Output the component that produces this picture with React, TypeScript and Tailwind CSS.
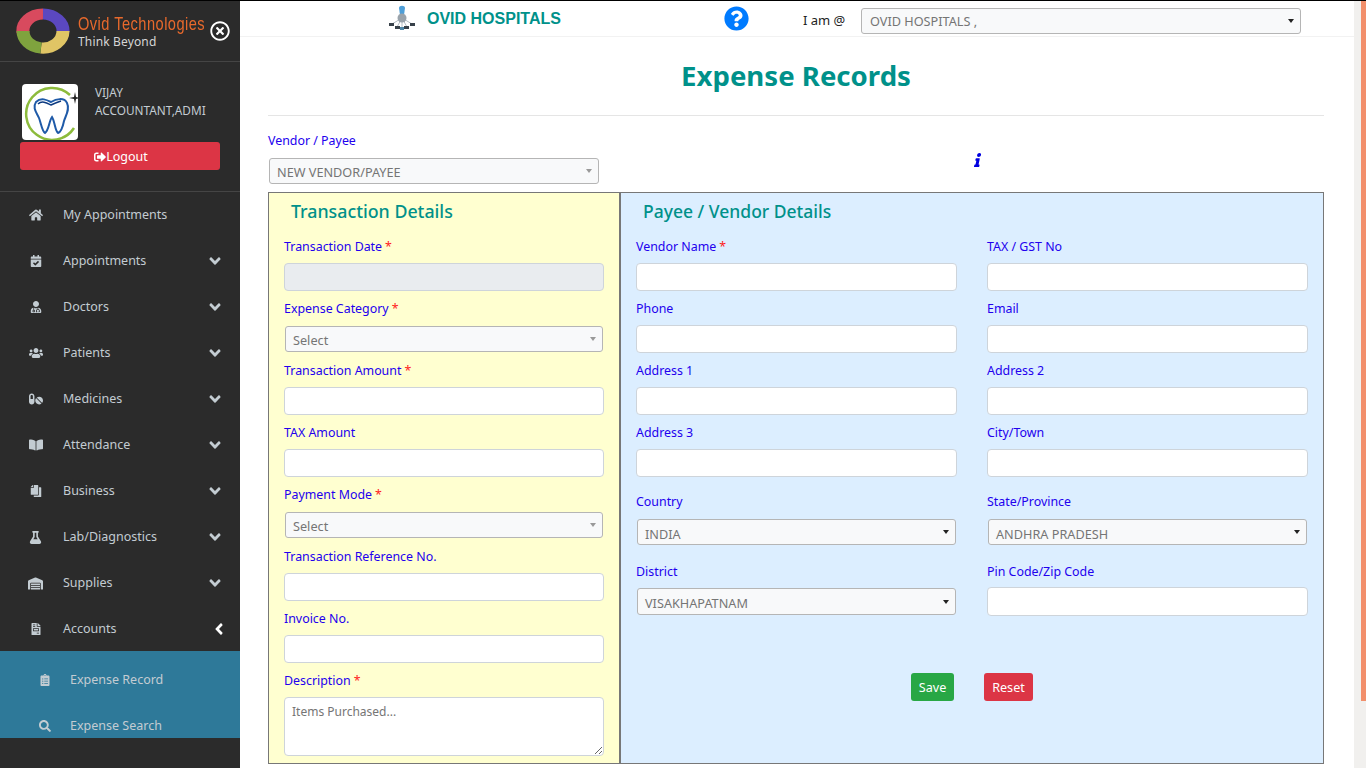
import type { ReactNode } from "react";
import {
  FaAngleDown,
  FaAngleLeft,
  FaBookOpen,
  FaCalendarCheck,
  FaClipboardList,
  FaCopy,
  FaFileInvoice,
  FaFlask,
  FaHome,
  FaInfo,
  FaPills,
  FaQuestionCircle,
  FaRegTimesCircle,
  FaSearch,
  FaSignOutAlt,
  FaUserMd,
  FaUsers,
  FaWarehouse,
} from "react-icons/fa";

const menu = [
  { label: "My Appointments", icon: <FaHome />, arrow: false },
  { label: "Appointments", icon: <FaCalendarCheck className="text-[12px]" />, arrow: true },
  { label: "Doctors", icon: <FaUserMd className="text-[12px]" />, arrow: true },
  { label: "Patients", icon: <FaUsers />, arrow: true },
  { label: "Medicines", icon: <FaPills />, arrow: true },
  { label: "Attendance", icon: <FaBookOpen />, arrow: true },
  { label: "Business", icon: <FaCopy className="text-[12px] -scale-x-100" />, arrow: true },
  { label: "Lab/Diagnostics", icon: <FaFlask className="text-[13px]" />, arrow: true },
  { label: "Supplies", icon: <FaWarehouse className="text-[15px]" />, arrow: true },
  { label: "Accounts", icon: <FaFileInvoice className="text-[12px]" />, arrow: false },
];

function DonutLogo() {
  return (
    <svg viewBox="-27 -27 54 54" preserveAspectRatio="none" className="h-[46px] w-[54px]">
      <g fill="none" strokeWidth="13">
        <path d="M-20 2A20 20 0 0 1 0 -20" stroke="#d84a5e" />
        <path d="M0 -20A20 20 0 0 1 20 1" stroke="#5b48c0" />
        <path d="M20 0A20 20 0 0 1 -2 20" stroke="#e0c565" />
        <path d="M-2 20A20 20 0 0 1 -20 0" stroke="#7fa33e" />
      </g>
    </svg>
  );
}

function ToothLogo() {
  return (
    <svg viewBox="0 0 56 56" className="h-14 w-14">
      <path d="M48 11A26 26 0 1 0 52 44" fill="none" stroke="#8dbb3c" strokeWidth="2.5" />
      <path
        d="M14 18C19 13 25 16 29 18C34 15 42 13 45 19C48 25 44 31 42 37C41 42 39 48 36 49C33 47 33 38 30 33C27 37 27 46 23 49C20 47 19 39 17 34C15 29 10 24 14 18Z"
        fill="none"
        stroke="#1f5aa8"
        strokeWidth="2"
      />
      <path d="M16 20C20 16 25 19 29 21C33 19 36 18 39 17" fill="none" stroke="#0d3a80" strokeWidth="1.5" />
      <polygon points="53,8 54,13 59,14 54,15 53,20 52,15 47,14 52,13" fill="#222" />
    </svg>
  );
}

function NetworkLogo() {
  return (
    <svg viewBox="0 0 28 28" className="h-7 w-7 blur-[0.4px]">
      <path d="M14 13L4 19M14 13L9 22M14 13L19 22M14 13L24 19M14 13V23" stroke="#b4bcc4" strokeWidth="1" />
      <path d="M11 3C11 0 17 0 17 3L16 10H12Z" fill="#4f9fd8" />
      <circle cx="14" cy="13" r="4.5" fill="#9aa3ab" />
      <rect x="1" y="18" width="5" height="3" fill="#38414a" />
      <rect x="7" y="21" width="5" height="3" fill="#38414a" />
      <rect x="12" y="22" width="4" height="3" fill="#4f87a8" />
      <rect x="16" y="21" width="5" height="3" fill="#38414a" />
      <rect x="22" y="18" width="5" height="3" fill="#38414a" />
    </svg>
  );
}

function Sidebar() {
  return (
    <aside className="flex h-full w-[240px] shrink-0 flex-col bg-[#2b2b2b] font-['Noto_Sans',sans-serif] text-[#c3ccd2]">
      <div className="flex h-[60px] shrink-0 items-center pl-4">
        <DonutLogo />
        <div className="ml-2 flex w-[132px] flex-col pt-[1px]">
          <span className="origin-left scale-x-[0.77] font-['Liberation_Sans',sans-serif] text-[19px] leading-[20px] tracking-[0.6px] whitespace-nowrap text-[#e8692c]">
            Ovid Technologies
          </span>
          <span className="text-[12px] leading-[16px] tracking-[0.15px] text-[#d5d5d5]">Think Beyond</span>
        </div>
        <FaRegTimesCircle className="text-[20px] text-white" />
      </div>

      <div className="h-[131px] shrink-0 border-y border-[#454545] px-5 pt-[22px]">
        <div className="flex pl-[2px]">
          <div className="h-14 w-14 overflow-hidden rounded bg-white">
            <ToothLogo />
          </div>
          <div className="-mt-px ml-[17px] text-[11.8px] leading-[18px]">
            <p>VIJAY</p>
            <p>ACCOUNTANT,ADMI</p>
          </div>
        </div>
        <button className="mt-[2px] flex h-7 w-[200px] items-center justify-center rounded-[3px] bg-[#dc3545] pt-[2px] pl-[2px] text-[12.5px] text-white">
          <FaSignOutAlt className="text-[12px]" />
          Logout
        </button>
      </div>

      {menu.map((item) => (
        <div key={item.label} className="flex h-[46px] shrink-0 items-center pl-7 pr-[16px] text-[12.5px]">
          <span className="flex w-[15px] justify-center text-[14px]">{item.icon}</span>
          <span className="ml-5 flex-1">{item.label}</span>
          {item.arrow ? (
            <FaAngleDown className="text-[18px]" />
          ) : item.label === "Accounts" ? (
            <FaAngleLeft className="mr-[-4px] text-[18px] text-white" />
          ) : null}
        </div>
      ))}

      <div className="-mt-px h-[87px] shrink-0 overflow-hidden bg-[#2e7999] pt-[6px] text-[12.5px]">
        <div className="flex h-[46px] items-center pl-[39px]">
          <span className="flex w-3 justify-center text-[12px]">
            <FaClipboardList />
          </span>
          <span className="ml-[19px]">Expense Record</span>
        </div>
        <div className="flex h-[46px] items-center pl-[39px]">
          <span className="flex w-3 justify-center text-[12px]">
            <FaSearch />
          </span>
          <span className="ml-[19px]">Expense Search</span>
        </div>
      </div>
    </aside>
  );
}

function Label({ text, required }: { text: string; required?: boolean }) {
  return (
    <label className="block h-6 text-[12.4px] leading-[26px] text-[#2200ee]">
      {text}
      {required && <span className="ml-[3px] text-[#ff2020]">*</span>}
    </label>
  );
}

function TextField({ label, required, disabled }: { label: string; required?: boolean; disabled?: boolean }) {
  return (
    <div className="h-[62px]">
      <Label text={label} required={required} />
      <input
        disabled={disabled}
        className={`mt-[5px] block h-7 w-full rounded border border-[#ced4da] ${disabled ? "bg-[#e9ecef]" : "bg-white"}`}
      />
    </div>
  );
}

function SelectBox({
  value,
  dark,
  className,
  textPad = "pt-[2px]",
}: {
  value: string;
  dark?: boolean;
  className: string;
  textPad?: string;
}) {
  return (
    <div
      className={`flex items-center justify-between rounded-[3px] border border-[#b5b5b5] bg-[#f8f9fa] pl-[7px] pr-[6px] text-[12.7px] text-[#757575] ${className}`}
    >
      <span className={textPad}>{value}</span>
      <span
        className={`h-0 w-0 border-x-[3.5px] border-t-4 border-x-transparent ${dark ? "border-t-[#222]" : "border-t-[#999]"}`}
      />
    </div>
  );
}

function LeftPanel() {
  return (
    <section className="h-full w-[352px] shrink-0 border-r-2 border-[#777] bg-[#ffffd0] pl-[15px] pr-[15px]">
      <h2 className="h-[41px] pl-[7px] text-[17.8px] leading-[36px] font-medium text-[#00918a]">Transaction Details</h2>
      <TextField label="Transaction Date" required disabled />
      <div className="h-[62px]">
        <Label text="Expense Category" required />
        <SelectBox value="Select" textPad="pt-[4px]" className="mx-px mt-[6px] h-[26px]" />
      </div>
      <TextField label="Transaction Amount" required />
      <TextField label="TAX Amount" />
      <div className="h-[62px]">
        <Label text="Payment Mode" required />
        <SelectBox value="Select" textPad="pt-[4px]" className="mx-px mt-[6px] h-[26px]" />
      </div>
      <TextField label="Transaction Reference No." />
      <TextField label="Invoice No." />
      <Label text="Description" required />
      <textarea
        placeholder="Items Purchased..."
        className="mt-[5px] block h-[59px] w-full rounded border border-[#ced4da] bg-white px-[7px] pt-[5px] text-[12px] placeholder:text-[#757575]"
      />
    </section>
  );
}

function RightField({ label, children, height }: { label: string; children: ReactNode; height: string }) {
  return (
    <div className={height}>
      <Label text={label} />
      {children}
    </div>
  );
}

function RightPanel() {
  return (
    <section className="h-full flex-1 bg-[#dceeff] pl-[15px] pr-[15px]">
      <h2 className="h-[41px] pl-[7px] text-[17.5px] leading-[36px] font-medium text-[#00918a]">Payee / Vendor Details</h2>
      <div className="grid grid-cols-[321px_321px] gap-x-[30px]">
        <TextField label="Vendor Name" required />
        <TextField label="TAX / GST No" />
        <TextField label="Phone" />
        <TextField label="Email" />
        <TextField label="Address 1" />
        <TextField label="Address 2" />
        <TextField label="Address 3" />
        <TextField label="City/Town" />
        <div className="col-span-2 h-[7px]" />
        <RightField label="Country" height="h-[70px]">
          <SelectBox value="INDIA" dark textPad="pt-[6px]" className="mx-px mt-[6px] h-[26px]" />
        </RightField>
        <RightField label="State/Province" height="h-[70px]">
          <SelectBox value="ANDHRA PRADESH" dark textPad="pt-[6px]" className="mx-px mt-[6px] h-[26px]" />
        </RightField>
        <RightField label="District" height="h-[58px]">
          <SelectBox value="VISAKHAPATNAM" dark textPad="pt-[4px]" className="mx-px mt-[5px] h-[27px]" />
        </RightField>
        <RightField label="Pin Code/Zip Code" height="h-[58px]">
          <input className="mt-1 block h-[29px] w-full rounded border border-[#ced4da] bg-white" />
        </RightField>
      </div>
      <div className="mt-[56px] flex pl-[275px] text-[12.6px] text-white">
        <button className="h-7 w-[43px] rounded-[3px] bg-[#28a745] pt-[2px]">Save</button>
        <button className="ml-[30px] h-7 w-[49px] rounded-[3px] bg-[#dc3545] pt-[2px]">Reset</button>
      </div>
    </section>
  );
}

export default function App() {
  return (
    <div className="flex h-[768px] w-[1366px] overflow-hidden border-t border-black bg-white font-['Noto_Sans',sans-serif]">
      <Sidebar />
      <main className="flex h-full min-w-0 flex-1 flex-col">
        <header className="flex h-[36px] shrink-0 items-center border-b border-[#f2f2f2] pl-[148px]">
          <NetworkLogo />
          <span className="ml-[11px] w-[297px] pt-px font-['Liberation_Sans',sans-serif] text-[16px] font-bold text-[#00918a]">
            OVID HOSPITALS
          </span>
          <FaQuestionCircle className="text-[25px] text-[#007bff]" />
          <span className="ml-[54px] w-[58px] pt-1 text-[13px] text-[#222]">I am @</span>
          <SelectBox value="OVID HOSPITALS ," dark textPad="pt-[2px] pl-px" className="mt-1 h-[26px] w-[440px]" />
        </header>

        <div className="flex min-h-0 flex-1 flex-col pl-[28px] pr-[30px]">
          <h1 className="mt-[20px] h-[37px] text-center text-[27.6px] leading-[37px] font-bold text-[#00918a]">
            Expense Records
          </h1>
          <hr className="mt-[21px] border-[#e5e5e5]" />
          <div className="relative h-[76px] pt-3">
            <Label text="Vendor / Payee" />
            <SelectBox value="NEW VENDOR/PAYEE" textPad="pt-[4px]" className="mt-[6px] ml-px h-[26px] w-[330px]" />
            <FaInfo className="absolute top-[37px] left-[703px] text-[14px] -skew-x-12 text-[#0000e0]" />
          </div>
          <div className="flex h-[572px] shrink-0 border border-[#777]">
            <LeftPanel />
            <RightPanel />
          </div>
        </div>
      </main>
      <div className="flex h-full w-3 shrink-0 bg-[#f1f0ee]">
        <div className="ml-[7px] h-[700px] w-[5px] bg-[#f28f6b]" />
      </div>
    </div>
  );
}
